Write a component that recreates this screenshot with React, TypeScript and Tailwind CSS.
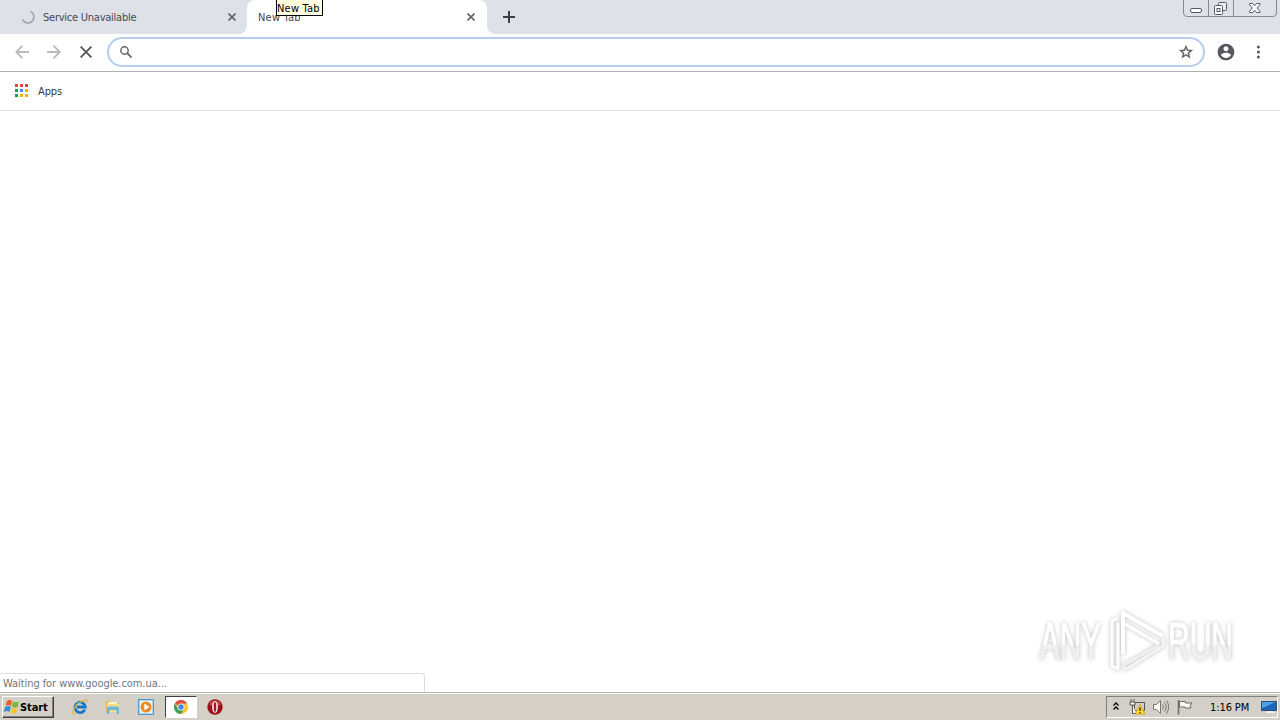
import type { ReactNode } from 'react';

const appDots = [
  'bg-[#db4437]', 'bg-[#db4437]', 'bg-[#db4437]',
  'bg-[#0f9d58]', 'bg-[#4285f4]', 'bg-[#f4b400]',
  'bg-[#0f9d58]', 'bg-[#f4b400]', 'bg-[#f4b400]',
];

const CloseIcon = () => (
  <svg className="h-2 w-2 shrink-0" viewBox="0 0 8 8" stroke="#5f6368" strokeWidth="1.6">
    <path d="M0.5 0.5l7 7M7.5 0.5l-7 7" />
  </svg>
);

const TabStrip = () => (
  <div className="flex h-[34px] bg-[#dee1e8]">
    <div className="flex h-full w-[247px] items-center rounded-br-lg pl-[21px] pr-[11px]">
      <svg className="h-4 w-4 shrink-0" viewBox="0 0 16 16" fill="none" stroke="#a5a7ad" strokeWidth="1.8">
        <path d="M9.500 2.500A6 6 0 1 1 1.600 10.500" />
      </svg>
      <span className="ml-[6px] flex-1 whitespace-nowrap tracking-[-0.24px] text-[#45484d]">
        Service Unavailable
      </span>
      <CloseIcon />
    </div>
    <div className="relative flex h-full w-60 items-center rounded-t-lg bg-white pl-[11px] pr-3">
      <span className="flex-1 tracking-[0.2px] text-[#45484d]">New Tab</span>
      <CloseIcon />
      {/* Concave feet of the active tab */}
      <svg className="absolute -left-2 bottom-0 h-2 w-2" viewBox="0 0 8 8" fill="#fff">
        <path d="M8 0v8H0a8 8 0 0 0 8-8" />
      </svg>
      <svg className="absolute -right-2 bottom-0 h-2 w-2" viewBox="0 0 8 8" fill="#fff">
        <path d="M0 0v8h8a8 8 0 0 1-8-8" />
      </svg>
      <div className="absolute -top-px left-[29px] flex h-[17px] w-[47px] items-center whitespace-nowrap border border-black bg-[#ffffe1] pt-px tracking-[0.2px] text-black">
        New Tab
      </div>
    </div>
    <svg className="ml-4 mt-[11px] h-3 w-3" viewBox="0 0 12 12" stroke="#3c4043" strokeWidth="2">
      <path d="M6 0v12M0 6h12" />
    </svg>
    <svg className="ml-auto mr-[3px] h-[17px] w-[94px]" viewBox="0 0 94 17" fill="none" stroke="#858992">
      <path d="M.5 0v13q0 3.500 3.500 3.500h86q3.500 0 3.500-3.500V0M25.500 0v16.500M50.500 0v16.500" />
      <rect x="7.500" y="8.500" width="11" height="4" rx="1.500" fill="#fff" stroke="#555961" />
      <g stroke="#555961">
        <rect x="35.500" y="2.500" width="8" height="8" rx="1" fill="#eef0f3" />
        <rect x="31.500" y="5.500" width="8" height="9" rx="1" fill="#fff" />
        <rect x="34" y="8.500" width="3" height="3" />
      </g>
      <path
        d="M66.500 3.500h3.200l2 2.300 2-2.300h3.200v1.200l-2.900 3.300 2.900 3.300v1.200h-3.200l-2-2.300-2 2.300h-3.200v-1.200l2.900-3.300-2.900-3.300z"
        fill="#fff"
        stroke="#555961"
      />
    </svg>
  </div>
);

const Toolbar = () => (
  <div className="flex h-[38px] items-center border-b border-[#adb0b3] bg-white pb-px">
    <svg className="ml-[15px] h-[14px] w-[14px]" viewBox="0 0 14 14" fill="none" stroke="#b9bbbd" strokeWidth="1.800">
      <path d="M14 7H1.500M7.500.7L1.200 7l6.300 6.300" />
    </svg>
    <svg className="ml-[18px] h-[14px] w-[14px]" viewBox="0 0 14 14" fill="none" stroke="#b9bbbd" strokeWidth="1.800">
      <path d="M0 7h12.500M6.500.7L12.800 7l-6.300 6.300" />
    </svg>
    <svg className="ml-[19px] h-3 w-3" viewBox="0 0 12 12" stroke="#55585c" strokeWidth="1.900">
      <path d="M.6.6l10.800 10.800M11.400.6L.6 11.400" />
    </svg>
    <div className="ml-[15px] flex h-[30px] w-[1098px] items-center rounded-full border-2 border-[#b5cdee] bg-white pl-[11px] pr-[9px]">
      <svg className="h-3 w-3" viewBox="0 0 12 12" fill="none" stroke="#5f6368" strokeWidth="1.400">
        <circle cx="4.500" cy="4.500" r="3.700" />
        <path d="M7.200 7.200l4.300 4.300" strokeWidth="1.700" />
      </svg>
      <svg className="ml-auto h-4 w-4" viewBox="0 0 24 24" fill="#55585e" stroke="#55585e" strokeWidth=".5">
        <path d="M22 9.240l-7.190-.62L12 2 9.190 8.630 2 9.240l5.460 4.730L5.820 21 12 17.270 18.180 21l-1.630-7.030L22 9.240zM12 15.400l-3.760 2.270 1-4.280-3.320-2.880 4.380-.38L12 6.100l1.710 4.040 4.380.38-3.320 2.880 1 4.280L12 15.400z" />
      </svg>
    </div>
    <svg className="ml-[11px] h-5 w-5" viewBox="0 0 24 24" fill="#55585e">
      <path d="M12 2C6.480 2 2 6.480 2 12s4.480 10 10 10 10-4.480 10-10S17.520 2 12 2zm0 3c1.660 0 3 1.340 3 3s-1.340 3-3 3-3-1.340-3-3 1.340-3 3-3zm0 14.200c-2.500 0-4.710-1.280-6-3.220.03-1.990 4-3.080 6-3.080 1.990 0 5.970 1.090 6 3.080-1.290 1.940-3.500 3.220-6 3.220z" />
    </svg>
    <svg className="ml-[20px] h-[14px] w-1" viewBox="0 0 4 14" fill="#55585e">
      <circle cx="2.400" cy="2" r="1.500" />
      <circle cx="2.400" cy="7" r="1.500" />
      <circle cx="2.400" cy="12" r="1.500" />
    </svg>
  </div>
);

const Watermark = () => (
  <svg
    className="absolute right-[40px] top-[494px] h-[76px] w-[210px] overflow-visible drop-shadow-[0_0_2px_rgba(0,0,0,0.25)]"
    viewBox="0 0 210 76"
  >
    <defs>
      <linearGradient id="logo-fade" gradientUnits="userSpaceOnUse" x1="0" y1="16" x2="0" y2="56">
        <stop offset="0.58" stopColor="#fff" />
        <stop offset="0.62" stopColor="#f0f0f0" />
      </linearGradient>
    </defs>
    <g
      fontFamily="'Liberation Sans Narrow', 'Liberation Sans', sans-serif"
      fontSize="52"
      fill="url(#logo-fade)"
      stroke="url(#logo-fade)"
      strokeWidth="1.200"
    >
      <text x="10" y="54" textLength="61" lengthAdjust="spacingAndGlyphs">ANY</text>
      <text x="138" y="54" textLength="65" lengthAdjust="spacingAndGlyphs">RUN</text>
    </g>
    <g fill="none" stroke="#fff" strokeWidth="4" strokeLinejoin="round">
      <path d="M93 49V8l40 23" />
      <path d="M93 18l36 21" strokeWidth="3" />
      <path d="M129 40L94 60" strokeWidth="3" stroke="#f0f0f0" />
      <path d="M88 13l-6 3v45l6 3V18" strokeWidth="3" />
      <path d="M133 33v8L96 64l-4-3" strokeWidth="3" stroke="#f5f5f5" />
    </g>
  </svg>
);

const Launch = ({ children }: { children: ReactNode }) => (
  <div className="flex h-[22px] w-[33px] items-center justify-center">{children}</div>
);

const Taskbar = () => (
  <div className="flex h-7 items-center border-t border-[#b7b6b2] bg-[#d4d0c8] pt-px shadow-[inset_0_1px_0_#fff]">
    <div className="ml-0.5 flex h-[22px] w-[52px] items-center border border-b-[#404040] border-l-white border-r-[#404040] border-t-white pl-px font-bold tracking-[-0.1px] text-black shadow-[inset_-1px_-1px_0_#808080]">
      <svg className="h-4 w-4 shrink-0" viewBox="0 0 16 16">
        <path d="M3 2q3-2 5 0L7 7Q4 5 1.500 7z" fill="#e95e22" />
        <path d="M9 2.500q3 1.500 6 0L13.500 8q-3 1.500-5.500-.5z" fill="#76b83f" />
        <path d="M1.200 8q3-2 5.500 0L5.500 13Q3 11-.2 13z" fill="#328ccf" />
        <path d="M7.700 8.700q3 1.500 5.700.2L12 14q-3 1.300-5.500-.5z" fill="#f8c42e" />
      </svg>
      Start
    </div>
    <div className="ml-[9px] flex items-center">
      <Launch>
        <svg className="h-4 w-4" viewBox="0 0 16 16" fill="none">
          <path d="M12.800 10.700A5.200 5.200 0 1 1 13.300 8H5" stroke="#1479ca" strokeWidth="2.800" />
          <path d="M4 6Q6 3.500 9 3.700" stroke="#7fd2f5" />
          <path d="M3 14Q0 16 1 12 4 5 11 1.500q5-2 4 2" stroke="#e9b72b" strokeWidth="1.300" />
        </svg>
      </Launch>
      <Launch>
        <svg className="h-4 w-4" viewBox="0 0 16 16">
          <path d="M1 2h5l1 2h7v9H1z" fill="#e3bd53" />
          <path d="M3 3h9v5H3z" fill="#f9f5cc" />
          <path d="M2 5h12v8H2z" fill="#f5df87" />
          <path d="M2 15V9.500q0-2 2-2h8q2 0 2 2V15h-2.500v-4h-7v4z" fill="#6bb8dc" />
        </svg>
      </Launch>
      <Launch>
        <svg className="ml-px h-4 w-4" viewBox="0 0 16 16">
          <rect x=".5" y=".5" width="15" height="15" fill="#a9d5ef" stroke="#5596c8" />
          <rect x="2" y="2" width="12" height="12" fill="#e8f6ff" />
          <circle cx="8" cy="8" r="5.500" fill="#f18a19" />
          <path d="M6.300 4.500v7L11.500 8z" fill="#fff" />
        </svg>
      </Launch>
      <div className="ml-[3px] flex h-[22px] w-8 items-center justify-center border border-b-white border-l-[#404040] border-r-white border-t-[#404040] bg-white">
        <svg className="h-[14px] w-[14px]" viewBox="0 0 16 16">
          <circle cx="8" cy="8" r="8" fill="#f7c52d" />
          <path d="M8 8L1.070 4A8 8 0 0 1 14.930 4H8z" fill="#df4c3f" />
          <path d="M1.070 4A8 8 0 0 0 8 16l3.500-6H4.600z" fill="#3ba45a" />
          <circle cx="8" cy="8" r="4" fill="#fff" />
          <circle cx="8" cy="8" r="3.100" fill="#4387ed" />
        </svg>
      </div>
      <Launch>
        <svg className="ml-0.5 h-4 w-4" viewBox="0 0 16 16">
          <circle cx="8" cy="8" r="7.700" fill="#9e1016" />
          <path d="M2 5.500a6.500 6.500 0 0 1 12 0Q8 9 2 5.500" fill="#c9474a" />
          <ellipse cx="8" cy="8" rx="2.900" ry="6" fill="#f1e6e5" />
          <ellipse cx="8" cy="8" rx="1.200" ry="5" fill="#a1151b" />
        </svg>
      </Launch>
    </div>

    <div className="ml-auto mr-0.5 flex h-[22px] w-[172px] items-center border border-b-white border-l-[#808080] border-r-white border-t-[#808080] pl-[6px] text-black">
      <svg className="mb-0.5 h-2 w-[6px]" viewBox="0 0 6 8" fill="none" stroke="#000" strokeWidth="1.300">
        <path d="M.5 3.500L3 1l2.500 2.500M.5 7.500L3 5l2.500 2.500" />
      </svg>
      <svg className="ml-[10px] h-4 w-4" viewBox="0 0 16 16">
        <path d="M5.500 3.500h10v8h-10z" fill="#d0cfc8" stroke="#55554f" />
        <path d="M1 3h5v3H1zM2 0v3M5 0v3M3.500 6v8.500h4" fill="#fff" stroke="#55554f" />
        <path d="M11 5.500l5 9.500H6z" fill="#ffdd22" stroke="#bc9212" strokeWidth=".7" />
        <path d="M11 8.500v3.500M11 13v1.200" stroke="#1b1b1b" strokeWidth="1.200" />
      </svg>
      <svg className="ml-2 h-4 w-4" viewBox="0 0 16 16" fill="none" stroke="#777872">
        <path d="M.5 5.500h3l4-4v13l-4-4h-3z" fill="#f8f8f5" />
        <path d="M9.500 5.500q2 2.500 0 5M11.500 3.500q3.500 4.500 0 9M13.500 1.500q4.500 6.500 0 13" />
      </svg>
      <svg className="ml-2 h-4 w-4" viewBox="0 0 16 16" fill="#faf9f5" stroke="#6b6a64">
        <path d="M1.500 1v14.500" strokeWidth="1.500" />
        <path d="M2.500 2.500h6v1.500H15l-2 3 1 2H8V8H2.500z" />
      </svg>
      <span className="ml-[17px] whitespace-nowrap tracking-[-0.1px]">1:16 PM</span>
      <svg className="ml-auto h-[14px] w-4" viewBox="0 0 16 14">
        <path d="M.5 1.500h15v9H.5z" fill="#1d64bb" stroke="#294c78" />
        <path d="M1 2h14L1 8z" fill="#4da1e5" />
        <path d="M6 11h6v1h2v1H5v-1h1z" fill="#e9f1f7" />
      </svg>
    </div>
  </div>
);

export default function App() {
  return (
    <div className="flex h-[720px] w-[1280px] flex-col overflow-hidden bg-white font-['DejaVu_Sans_Condensed','DejaVu_Sans',sans-serif] text-[11px] leading-[13px] [font-stretch:condensed]">
      <TabStrip />
      <Toolbar />
      {/* Bookmarks bar */}
      <div className="flex h-[39px] items-center border-b border-[#dfe1e4] pl-[15px]">
        <div className="mb-px grid grid-cols-3 gap-0.5">
          {appDots.map((color, i) => (
            <div key={i} className={`h-[3px] w-[3px] ${color}`} />
          ))}
        </div>
        <span className="ml-[10px] tracking-[-0.1px] text-[#34373a]">Apps</span>
      </div>
      <main className="relative flex flex-1 items-end">
        <Watermark />
        <div className="flex h-[19px] w-[425px] items-center rounded-tr border-r border-t border-[#dcdcdc] pl-[3px] tracking-[-0.07px] text-[#70757a]">
          Waiting for www.google.com.ua...
        </div>
      </main>
      <Taskbar />
    </div>
  );
}
